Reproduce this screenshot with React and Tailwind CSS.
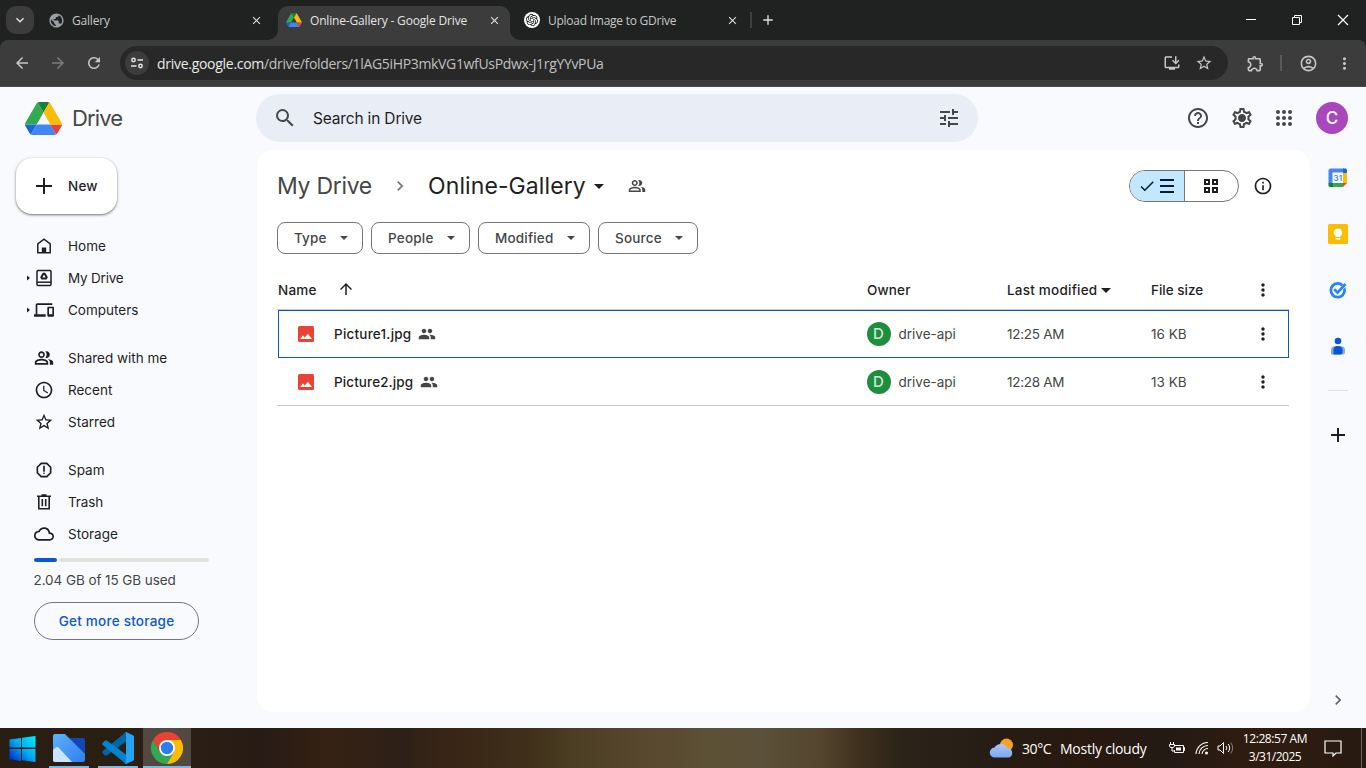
import React from "react";
import {
  MdSearch, MdTune, MdHelpOutline, MdOutlineSettings, MdOutlineDevices, MdOutlinePeopleAlt,
  MdAccessTime, MdStarBorder, MdOutlineReport, MdCloudQueue, MdInfoOutline, MdPeople,
  MdArrowUpward, MdArrowBack, MdArrowForward, MdRefresh, MdOutlineInstallDesktop,
  MdOutlineExtension, MdOutlineAccountCircle, MdMoreVert, MdChevronRight, MdAdd, MdPublic,
  MdCheck, MdClose, MdExpandMore,
} from "react-icons/md";
import { SiOpenai } from "react-icons/si";

function T({ className = "", children }) {
  return <span className={"shrink-0 whitespace-nowrap " + className}>{children}</span>;
}

function Caret({ className = "h-1 w-2" }) {
  return <svg viewBox="0 0 10 5" className={"shrink-0 " + className} fill="currentColor"><path d="M0 0h10L5 5z" /></svg>;
}

function DriveLogo({ className }) {
  return (
    <svg viewBox="0 0 87.3 78" className={className}>
      <path d="M6.6 66.85l3.85 6.65c.8 1.4 1.95 2.5 3.3 3.3L27.5 53H0c0 1.55.4 3.1 1.2 4.5z" fill="#1967d2" />
      <path d="M43.65 25L29.9 1.2c-1.35.8-2.5 1.9-3.3 3.3L1.2 48.5A9.06 9.06 0 0 0 0 53h27.5z" fill="#34a853" />
      <path d="M73.55 76.8c1.35-.8 2.5-1.9 3.3-3.3l1.6-2.75L86.1 57.5c.8-1.4 1.2-2.95 1.2-4.5H59.8l5.85 11.5z" fill="#ea4335" />
      <path d="M43.65 25L57.4 1.2C56.05.4 54.5 0 52.9 0H34.4c-1.6 0-3.15.45-4.5 1.2z" fill="#188038" />
      <path d="M59.8 53H27.5L13.75 76.8c1.35.8 2.9 1.2 4.5 1.2h50.8c1.6 0 3.15-.45 4.5-1.2z" fill="#4285f4" />
      <path d="M73.4 26.5L60.7 4.5c-.8-1.4-1.95-2.5-3.3-3.3L43.65 25 59.8 53h27.45c0-1.55-.4-3.1-1.2-4.5z" fill="#fbbc04" />
    </svg>
  );
}

function TabBar() {
  return (
    <div className="flex h-10 bg-[#202221] text-xs text-[#c7c7c7]">
      <div className="flex w-[278px] items-center pl-1.5">
        <div className="flex size-7 items-center justify-center rounded-[10px] bg-[#3c3c3c] text-[#e3e3e3]">
          <MdExpandMore className="size-4" />
        </div>
        <div className="ml-[15px] flex w-[199px] items-center">
          <MdPublic className="-ml-px size-[17px] shrink-0 text-[#9aa0a6]" />
          <span className="w-[7px]" />
          <T className="pt-0.5 tracking-[-0.2px]">Gallery</T>
        </div>
        <MdClose className="ml-0.5 size-[13px] text-[#dedede]" />
      </div>
      <div className="relative mt-1.5 flex w-[232px] items-center rounded-t-[10px] bg-[#3c3c3c] pr-[9px] pb-1.5 pl-2 text-[#e3e3e3]">
        <svg viewBox="0 0 10 10" className="absolute bottom-0 -left-2.5 size-2.5"><path d="M10 0v10H0A10 10 0 0 0 10 0z" fill="#3c3c3c" /></svg>
        <svg viewBox="0 0 10 10" className="absolute -right-2.5 bottom-0 size-2.5"><path d="M0 0v10h10A10 10 0 0 1 0 0z" fill="#3c3c3c" /></svg>
        <DriveLogo className="h-3.5 w-4" />
        <span className="w-2" />
        <T className="pt-0.5 tracking-[-0.165px]">Online-Gallery - Google Drive</T>
        <MdClose className="ml-auto size-[13px]" />
      </div>
      <div className="flex w-[241px] items-center pl-3.5">
        <div className="flex size-4 items-center justify-center rounded-full bg-white text-[#111]"><SiOpenai className="size-3" /></div>
        <span className="w-2" />
        <T className="pt-0.5 tracking-[-0.25px]">Upload Image to GDrive</T>
        <MdClose className="mr-[12px] ml-auto size-[13px] text-[#dedede]" />
      </div>
      <div className="flex items-center">
        <div className="-ml-px h-4 w-0.5 bg-[#3f3f3f]" />
        <MdAdd className="ml-2 size-4 text-[#e3e3e3]" />
      </div>
      <div className="ml-auto flex items-center text-white">
        <svg viewBox="0 0 46 40" className="h-10 w-[46px]" stroke="currentColor" fill="none"><path d="M18 19.500h10" /></svg>
        <svg viewBox="0 0 46 40" className="h-10 w-[46px]" stroke="currentColor" fill="none"><path d="M18.500 17.500h7v7h-7zM20.500 17v-1.500h7v7H26" /></svg>
        <svg viewBox="0 0 46 40" className="h-10 w-[46px]" stroke="currentColor" fill="none" strokeWidth="1.200"><path d="M18 15l10 10M28 15L18 25" /></svg>
      </div>
    </div>
  );
}

function Toolbar() {
  return (
    <div className="bg-[#202221]">
      <div className="flex h-[47px] items-center rounded-t-lg border-b border-[#4a4a4a] bg-[#3c3c3c] text-[#c7c7c7]">
        <MdArrowBack className="ml-[13px] size-[18px]" />
        <MdArrowForward className="ml-[18px] size-[18px] text-[#7c7c7c]" />
        <MdRefresh className="ml-[18px] size-[18px]" />
        <div className="ml-[17px] flex h-[34px] w-[1108px] items-center rounded-full bg-[#282828] pr-[15px] pl-[5px]">
          <div className="flex size-6 items-center justify-center rounded-full bg-[#3c3c3c]">
            <svg viewBox="0 0 14 14" className="size-3.5" fill="none" stroke="#e3e3e3" strokeWidth="1.500"><circle cx="3.500" cy="4" r="1.700" /><path d="M7.500 4H13M1 10h5.500" /><circle cx="10.500" cy="10" r="1.700" /></svg>
          </div>
          <span className="w-2" />
          <span className="flex text-[14px]">
            <T className="tracking-[-0.285px] text-[#e8e8e8]">drive.google.com</T>
            <T className="tracking-[-0.334px] text-[#c0c0c0]">/drive/folders/1lAG5iHP3mkVG1wfUsPdwx-J1rgYYvPUa</T>
          </span>
          <MdOutlineInstallDesktop className="ml-auto size-[18px]" />
          <MdStarBorder className="ml-3.5 size-[18px]" />
        </div>
        <MdOutlineExtension className="ml-[18px] size-[19px]" />
        <div className="ml-[15px] h-4 w-0.5 bg-[#5a5a5a]" />
        <MdOutlineAccountCircle className="ml-[17px] size-[19px]" />
        <MdMoreVert className="ml-[17px] size-[19px]" />
      </div>
    </div>
  );
}

function Header() {
  return (
    <header className="flex h-[63px] items-center pb-px text-[#444746]">
      <DriveLogo className="ml-[25px] h-[33px] w-[37px]" />
      <div className="w-[194px] pl-[10px]"><T className="text-[22px] tracking-[-0.9px]">Drive</T></div>
      <div className="flex h-12 w-[722px] items-center rounded-full bg-[#e9eef6] pr-[17px] pl-[17px]">
        <MdSearch className="size-6" />
        <span className="w-4" />
        <T className="pt-0.5 text-[15.5px] tracking-[-0.17px] text-[#1f1f1f]">Search in Drive</T>
        <MdTune className="ml-auto size-6" />
      </div>
      <MdHelpOutline className="ml-52 size-6" />
      <svg viewBox="0 0 24 24" className="ml-5 size-6"><MdOutlineSettings size={24} /><circle cx="12" cy="12" r="3.400" fill="currentColor" /></svg>
      <svg viewBox="0 0 24 24" className="ml-[18px] size-6" fill="currentColor">
        {[6, 12, 18].map((y) => [6, 12, 18].map((x) => <circle key={x + "-" + y} cx={x} cy={y} r="2" />))}
      </svg>
      <div className="ml-5 flex size-8 items-center justify-center rounded-full bg-[#ab47bc] pt-px text-[17px] font-medium text-white">C</div>
    </header>
  );
}

const HomeIcon = () => <svg viewBox="0 0 20 20" className="size-5" fill="none" stroke="currentColor" strokeWidth="1.500"><path d="M3.800 16.800V7.800L10 3.200l6.200 4.600v9z" /><path d="M7.800 17v-5.500h4.400V17z" fill="currentColor" stroke="none" /></svg>;
const MyDriveIcon = () => <svg viewBox="0 0 20 20" className="size-5" fill="none" stroke="currentColor" strokeWidth="1.500"><rect x="3" y="2.500" width="14" height="15" rx="1" /><path d="M3 14.200h14" /><path d="M9.300 5.800h1.400l2 3.400-.7 1.200H8l-.7-1.200z" strokeWidth="2" /></svg>;
const TrashIcon = () => <svg viewBox="0 0 20 20" className="size-5" fill="none" stroke="currentColor" strokeWidth="1.600"><path d="M3 4.300h14M7.500 3h5M4.800 4.500v12.200h10.400V4.500M8.300 7v7.300M11.700 7v7.300" /></svg>;
const mk = (I) => () => <I className="size-5" />;

const NAV = [
  [["Home", HomeIcon, false, ""], ["My Drive", MyDriveIcon, true, "tracking-[-0.2px]"], ["Computers", mk(MdOutlineDevices), true, ""]],
  [["Shared with me", mk(MdOutlinePeopleAlt), false, ""], ["Recent", mk(MdAccessTime), false, ""], ["Starred", mk(MdStarBorder), false, ""]],
  [["Spam", mk(MdOutlineReport), false, ""], ["Trash", TrashIcon, false, "tracking-[-0.1px]"], ["Storage", mk(MdCloudQueue), false, ""]],
];

function Sidebar() {
  return (
    <nav className="w-[257px] pt-2 text-[13.5px] text-[#1f1f1f]">
      <button className="ml-4 flex h-14 w-[101px] items-center rounded-2xl bg-white pl-4 font-medium shadow-[0_1px_2px_rgba(0,0,0,0.4),0_1px_3px_1px_rgba(0,0,0,0.13)]">
        <svg viewBox="0 0 24 24" className="size-6" stroke="currentColor" strokeWidth="2"><path d="M12 4v16M4 12h16" /></svg>
        <span className="w-3" />
        <T className="tracking-[0.2px]">New</T>
      </button>
      {NAV.map((group, i) => (
        <ul key={i} className="mt-4">
          {group.map(([label, Icon, arrow, tracking]) => (
            <li key={label} className="flex h-8 items-center pl-[26px]">
              <svg viewBox="0 0 8 20" className="h-5 w-2" fill="currentColor">{arrow && <path d="M1 7.500v5L4 10z" />}</svg>
              <Icon />
              <span className="w-3.5" />
              <T className={tracking}>{label}</T>
            </li>
          ))}
        </ul>
      ))}
      <div className="mt-2 ml-[34px] flex h-1 w-[175px] gap-0.5">
        <div className="w-[23px] rounded-full bg-[#0b57d0]" />
        <div className="flex-1 rounded-full bg-[#e1e3e1]" />
      </div>
      <div className="mt-2 ml-[33.5px] h-5 leading-5 text-[#444746]"><T className="tracking-[-0.08px]">2.04 GB of 15 GB used</T></div>
      <button className="mt-3 ml-[34px] flex h-[38px] w-[165px] items-center justify-center rounded-full border border-[#747775] font-medium text-[#0b57d0]"><T className="tracking-[0.24px]">Get more storage</T></button>
    </nav>
  );
}

function Chip({ label, className }) {
  return (
    <button className={"flex h-8 items-center justify-between rounded-lg border border-[#747775] pr-3.5 pl-4 font-medium text-[#444746] " + className}>
      <T>{label}</T>
      <Caret />
    </button>
  );
}

const FILES = [
  { name: "Picture1.jpg", tracking: "tracking-[0.22px]", time: "12:25 AM", size: "16 KB" },
  { name: "Picture2.jpg", tracking: "tracking-[0.1px]", time: "12:28 AM", size: "13 KB" },
];

function Main() {
  return (
    <main className="w-[1053px] rounded-2xl bg-white pt-4 pr-[21px] pl-5 text-[13.5px] text-[#1f1f1f]">
      <div className="flex h-10 items-center text-[23px]">
        <div className="w-[95px]"><T className="tracking-[-0.3px] text-[#444746]">My Drive</T></div>
        <MdChevronRight className="ml-[18px] size-5 text-[#747775]" />
        <span className="w-[18px]" />
        <T className="tracking-[0.1px]">Online-Gallery</T>
        <Caret className="ml-2 h-[5px] w-2.5" />
        <MdOutlinePeopleAlt className="ml-6 size-[18px] text-[#444746]" />
        <div className="ml-auto flex h-8 w-[110px] overflow-hidden rounded-full border border-[#747775]">
          <div className="flex w-[55px] items-center border-r border-[#747775] bg-[#c2e7ff] pl-2 text-[#001d35]">
            <MdCheck className="size-[18px]" />
            <svg viewBox="0 0 16 16" className="ml-[3px] size-4" stroke="currentColor" strokeWidth="2"><path d="M1 2h14M1 8h14M1 14h14" /></svg>
          </div>
          <div className="flex flex-1 items-center justify-center pr-0.5">
            <svg viewBox="0 0 16 16" className="size-4" fill="none" stroke="currentColor" strokeWidth="2"><path d="M2 2h4v4H2zM10 2h4v4h-4zM2 10h4v4H2zM10 10h4v4h-4z" /></svg>
          </div>
        </div>
        <MdInfoOutline className="mr-4 ml-3.5 size-5" />
      </div>
      <div className="mt-4 flex gap-2">
        <Chip label="Type" className="w-[86px] tracking-[0.12px]" />
        <Chip label="People" className="w-[99px] tracking-[0.2px]" />
        <Chip label="Modified" className="w-28 tracking-[0.18px]" />
        <Chip label="Source" className="w-[100px] tracking-[0.2px]" />
      </div>
      <div className="mt-4 flex h-10 items-center border-b border-[#c7c7c7] pt-px font-medium">
        <div className="flex w-[590px] items-center"><div className="w-[60px] pl-px tracking-[0.2px]"><T>Name</T></div><MdArrowUpward className="mb-0.5 size-[18px]" /></div>
        <div className="w-[140px] tracking-[0.15px]"><T>Owner</T></div>
        <div className="flex w-36 items-center gap-1 tracking-[0.22px]"><T>Last modified</T><Caret className="h-[5px] w-2.5" /></div>
        <div className="w-[102px]"><T>File size</T></div>
        <MdMoreVert className="size-5" />
      </div>
      {FILES.map((f, i) => (
        <div key={f.name} className={i === 0 ? "ml-px flex h-12 items-center border border-[#0b57d0] pl-[19px]" : "flex h-12 items-center border-b border-[#c7c7c7] pt-px pl-[21px]"}>
          <svg viewBox="0 0 16 16" className="size-4"><rect width="16" height="16" rx="1.500" fill="#ea4335" /><path d="M2.200 13l2.600-3.800 1.800 2.200L10 7.800l4 5.200z" fill="#fff" /></svg>
          <span className="w-5" />
          <div className="flex w-[532.5px] items-center gap-[6.5px] font-medium"><T className={f.tracking}>{f.name}</T><MdPeople className="size-[18px] text-[#444746]" /></div>
          <div className="flex w-[140.5px] items-center text-[#444746]">
            <div className="mr-2 flex size-6 items-center justify-center rounded-full bg-[#1e8e3e] text-[15px] font-medium text-[#ceead6]">D</div>
            <T>drive-api</T>
          </div>
          <div className="w-36 tracking-[-0.28px] text-[#444746]"><T>{f.time}</T></div>
          <div className="w-[101.5px] text-[#444746]"><T>{f.size}</T></div>
          <MdMoreVert className="size-5" />
        </div>
      ))}
    </main>
  );
}

function Rail() {
  return (
    <aside className="flex w-14 flex-col items-center pt-[18px]">
      <svg viewBox="0 0 20 20" className="size-5">
        <path d="M2 .5H16V5H5v11H.5V2z" fill="#4285f4" /><path d="M15 .5h3l1 1V5h-4z" fill="#1967d2" /><path d="M15 5h4v10h-4z" fill="#fbbc04" />
        <path d="M5 15h10v4H5z" fill="#34a853" /><path d="M.5 15H5v4H1.500l-1-1z" fill="#188038" /><path d="M15 15h4l-4 4z" fill="#ea4335" /><path d="M4.500 4.500H15V15H4.500z" fill="#fff" />
        <text x="9.800" y="12.800" textAnchor="middle" fontSize="8" fontWeight="600" fill="#4285f4">31</text>
      </svg>
      <svg viewBox="0 0 20 20" className="mt-9 size-5"><rect width="20" height="20" rx="1.500" fill="#fbbc04" /><path d="M10 4.500a4.200 4.200 0 0 0-2.300 7.700V13h4.600v-.8A4.200 4.200 0 0 0 10 4.500zM7.700 14h4.600v1.400H7.700z" fill="#fff" /></svg>
      <svg viewBox="0 0 20 20" className="mt-9 size-5" fill="none"><circle cx="9.700" cy="10.300" r="6.900" stroke="#2684fc" strokeWidth="2.800" /><path d="M6.300 9.300l3.300 3.300L18 4" stroke="#f9fafe" strokeWidth="3.400" /><path d="M6.300 9.300l3.300 3.300L17.500 4" stroke="#2684fc" strokeWidth="2.700" /></svg>
      <svg viewBox="0 0 20 20" className="mt-9 size-5"><circle cx="10" cy="5" r="3.300" fill="#0b57d0" /><path d="M3 18.500v-4.300a4 4 0 0 1 4-4h6a4 4 0 0 1 4 4v2.300a2 2 0 0 1-2 2z" fill="#7baaf7" /><path d="M5.500 18.500V14a4 4 0 0 1 3.500-4h2a4 4 0 0 1 3.500 4v2.500a2 2 0 0 1-2 2z" fill="#0b57d0" /></svg>
      <div className="mt-[34px] h-px w-5 bg-[#dde1e6]" />
      <svg viewBox="0 0 20 20" className="mt-[34px] size-5" stroke="#1f1f1f" strokeWidth="2"><path d="M10 3v14M3 10h14" /></svg>
      <MdChevronRight className="mt-auto mb-0.5 size-5 text-[#5f6368]" />
    </aside>
  );
}

function Taskbar() {
  return (
    <footer className="flex h-10 items-center bg-[linear-gradient(90deg,#2a1d12_0,#2b1e13_190px,#271b15_260px,#352213_330px,#2e2018_400px,#382515_450px,#40301b_530px,#4b3e23_575px,#57472d_640px,#5c5035_710px,#5b5039_760px,#54462f_820px,#3f301d_860px,#2c2419_900px,#261d15_980px,#29190f_1080px,#241a14_1160px,#301c0f_1260px,#271a12_1366px)] text-white">
      <svg viewBox="0 0 48 40" className="h-10 w-[49px]">
        <defs><linearGradient id="win" x1="1" y1="0" x2="0" y2="1"><stop offset="0" stopColor="#00f0ff" /><stop offset=".5" stopColor="#00a8f0" /><stop offset="1" stopColor="#0018c8" /></linearGradient></defs>
        <path d="M9 11.500L20.500 10v9.500H9zM21.500 9.800L35 8v11.500H21.500zM9 21h11.500v12L9 31.300zM21.500 21H35v13l-13.500-1.800z" fill="url(#win)" />
      </svg>
      <div className="flex h-10 w-10 items-center justify-center border-b-2 border-[#76b9ed]">
        <svg viewBox="0 0 32 28" className="mt-0.5 h-7 w-8">
          <defs><linearGradient id="fa" x1="0" y1="0" x2="1" y2="1"><stop offset="0" stopColor="#5fb0f8" /><stop offset="1" stopColor="#2f7ff0" /></linearGradient></defs>
          <path d="M14 4h16a2 2 0 0 1 2 2v16z" fill="#1546b8" />
          <path d="M0 2a2 2 0 0 1 2-2h10l20 20v6a2 2 0 0 1-2 2H2a2 2 0 0 1-2-2z" fill="url(#fa)" />
          <path d="M0 16l2-2a3 3 0 0 1 4 0l13 14H2a2 2 0 0 1-2-2z" fill="#cbe3fc" />
        </svg>
      </div>
      <div className="ml-[9px] flex h-10 w-10 items-center justify-center border-b-2 border-[#76b9ed]">
        <svg viewBox="0 0 32 32" className="mt-0.5 size-8">
          <path d="M24 0L1 18.800a1.800 1.800 0 0 0 0 2.700l1.800 1.700a1.800 1.800 0 0 0 2.300 0L24 9.500z" fill="#0065a9" />
          <path d="M24 32L1 13.200a1.800 1.800 0 0 1 0-2.700l1.800-1.700a1.800 1.800 0 0 1 2.300 0L24 22.500z" fill="#0083d0" />
          <path d="M24 0l7 3.200a1.800 1.800 0 0 1 1 1.600v22.400a1.800 1.800 0 0 1-1 1.600L24 32c-.6.200-1.500 0-2-.6.800.7 2 .2 2-.9v-29c0-1-1.200-1.600-2-.8.500-.6 1.300-.9 2-.7z" fill="#24a4f0" />
        </svg>
      </div>
      <div className="ml-[5px] flex h-10 w-12 items-center justify-center border-b-2 border-[#76b9ed] bg-[#544941]">
        <svg viewBox="0 0 32 32" className="mt-0.5 size-8">
          <path d="M2.140 8A16 16 0 0 0 16 32l6.930-12L16 16l-6.930 4z" fill="#34a853" />
          <path d="M2.140 8A16 16 0 0 1 29.860 8H16L9.070 20z" fill="#ea4335" />
          <path d="M22.930 20L16 32a16 16 0 0 0 13.860-24H16z" fill="#fbbc04" />
          <circle cx="16" cy="16" r="8" fill="#fff" /><circle cx="16" cy="16" r="6.200" fill="#2b7df0" />
        </svg>
      </div>
      <svg viewBox="0 0 26 22" className="ml-auto h-[22px] w-[26px]">
        <defs><linearGradient id="cl" x1="0" y1="0" x2="0" y2="1"><stop offset="0" stopColor="#a8c8fa" /><stop offset="1" stopColor="#7fa6ee" /></linearGradient></defs>
        <circle cx="17.500" cy="8" r="6.500" fill="#f9a11b" />
        <path d="M6 20.500a5 5 0 0 1-.5-10A7.500 7.500 0 0 1 18.500 11a4.900 4.900 0 0 1 1.500 9.500z" fill="url(#cl)" />
      </svg>
      <span className="w-[7px]" />
      <div className="w-[38px] text-[14px] tracking-[-0.4px]"><T>30°C</T></div>
      <div className="w-[109px] text-[14px] tracking-[-0.24px]"><T>Mostly cloudy</T></div>
      <svg viewBox="0 0 16 14" className="h-3.5 w-4" fill="none" stroke="currentColor"><path d="M5.500 4.500h9v7h-9V9M14.500 6.500h1v3h-1" /><path d="M7 6.500h5v3H7z" fill="currentColor" stroke="none" /><path d="M1.500 1v2M4.500 1v2M.5 3.500h5v2l-1.500 1H2l-1.500-1zM3 6.500v3.500h2.500" /></svg>
      <svg viewBox="0 0 14 14" className="ml-[10px] size-3.5" fill="none" stroke="currentColor"><path d="M1 13A12 12 0 0 1 13 1.500M4 13a9 9 0 0 1 9-8.500M7 13a6 6 0 0 1 6-5.500" strokeWidth="1.100" /><circle cx="11.500" cy="12" r="1.500" fill="currentColor" stroke="none" /></svg>
      <svg viewBox="0 0 17 14" className="ml-2 h-3.5 w-[17px]" fill="none" stroke="currentColor"><path d="M1 5h2l3.500-3.500v11L3 9H1zM9 5a3 3 0 0 1 0 4M11 3a5.500 5.500 0 0 1 0 8" /><path d="M13.500 1.500a8 8 0 0 1 0 11" stroke="#8a8079" /></svg>
      <div className="ml-[5px] flex w-[72px] flex-col items-center text-xs leading-[18px]"><T className="tracking-[-0.42px]">12:28:57 AM</T><T className="tracking-[-0.5px]">3/31/2025</T></div>
      <svg viewBox="0 0 18 18" className="ml-[13px] size-[18px]" fill="none" stroke="currentColor" strokeWidth="1.200"><path d="M1 2h16v12h-5l-3 3v-3H1z" /></svg>
      <div className="ml-[19px] h-10 w-px bg-[#6b625b]" />
      <div className="w-1" />
    </footer>
  );
}

export default function App() {
  return (
    <div className="flex h-[768px] w-[1366px] flex-col overflow-hidden bg-[#f9fafe] font-['Inter',sans-serif]">
      <div className="font-['Open_Sans',sans-serif]">
        <TabBar />
        <Toolbar />
      </div>
      <Header />
      <div className="flex h-[562px]">
        <Sidebar />
        <Main />
        <Rail />
      </div>
      <div className="mt-auto font-['Open_Sans',sans-serif]"><Taskbar /></div>
    </div>
  );
}
